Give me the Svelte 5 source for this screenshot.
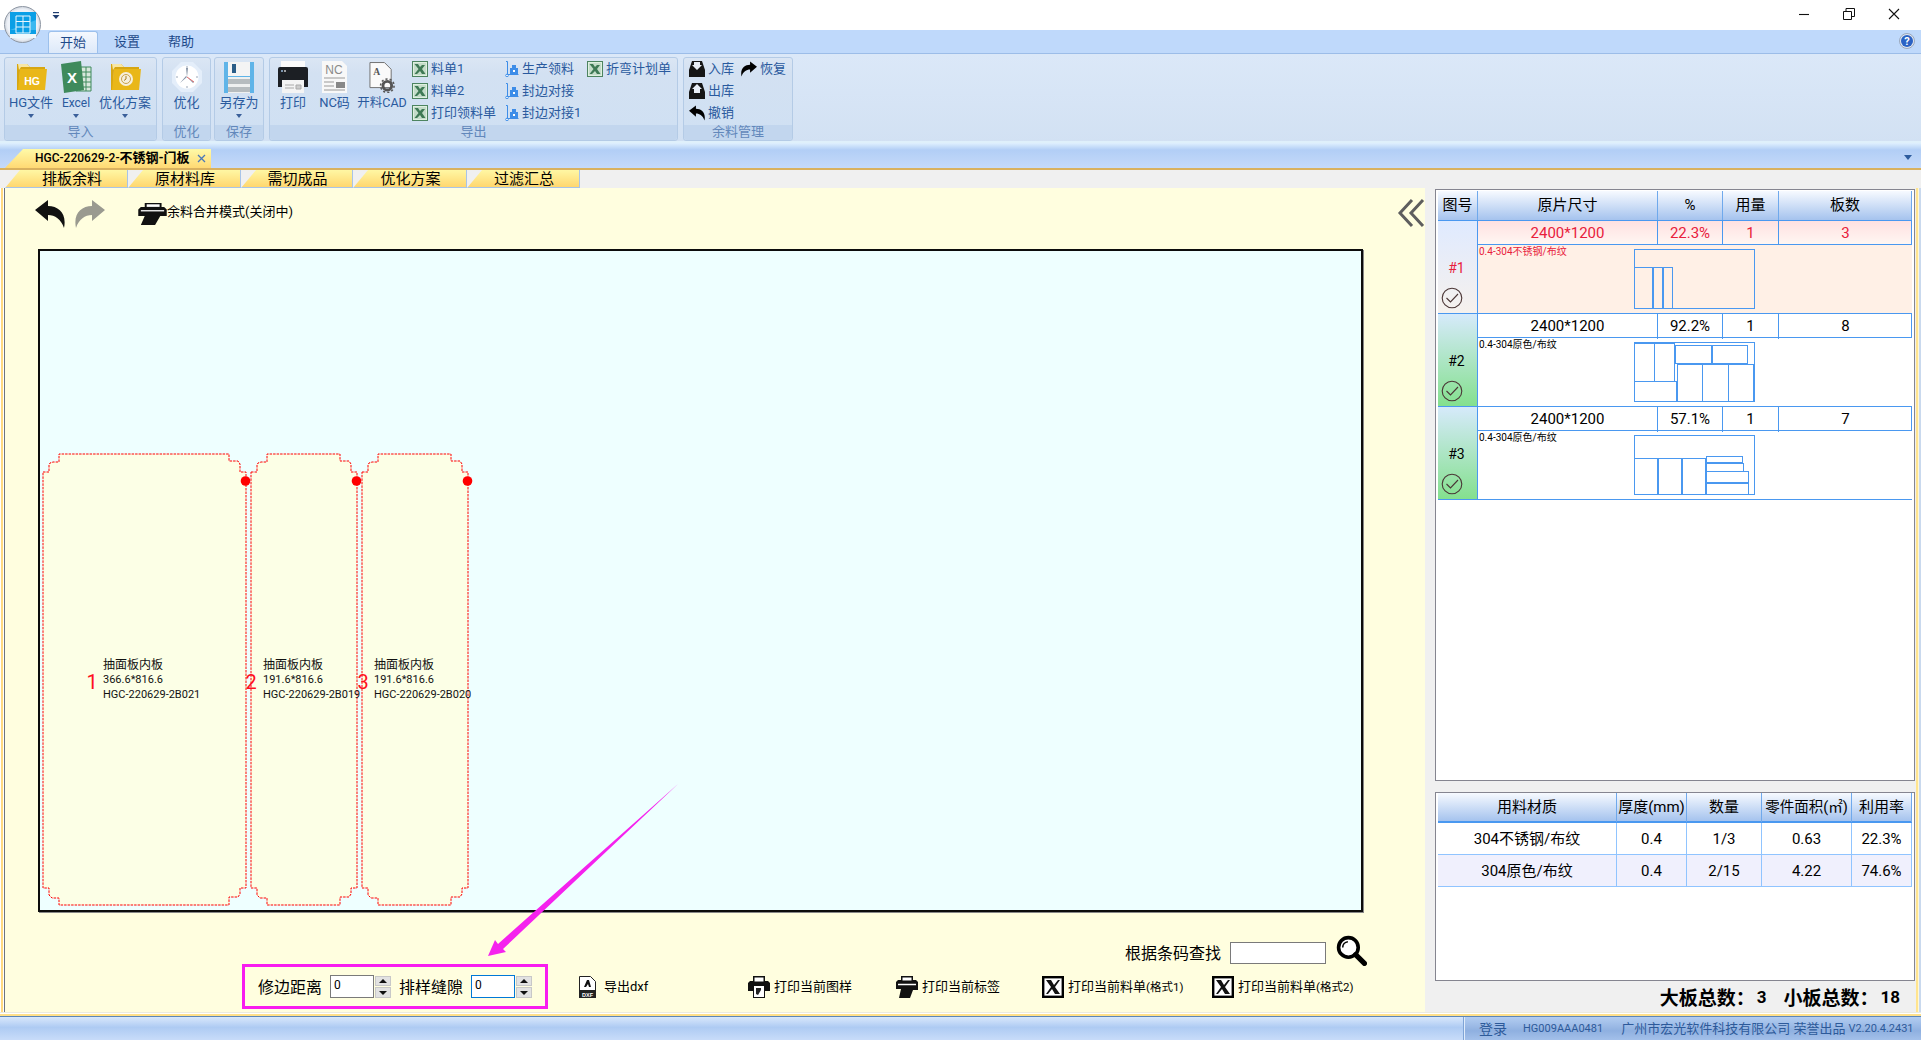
<script>
  const ribbonTabs = ['设置', '帮助'];
  const outCols = [
    { cls: 'c1', icon: 'xl', items: ['料单1', '料单2', '打印领料单'] },
    { cls: 'c2', icon: 'truck', items: ['生产领料', '封边对接', '封边对接1'] },
    { cls: 'c3', icon: 'xl', items: ['折弯计划单'] }
  ];
  const innerTabs = [
    ['排板余料', 123, 'first'], ['原材料库', 113, ''], ['需切成品', 112, ''], ['优化方案', 114, ''], ['过滤汇总', 113, '']
  ];
  const plans = [
    { id: '#1', pct: '22.3%', qty: 3, mat: '0.4-304不锈钢/布纹', hot: true,
      rects: [[0,18,18,41],[19,18,9,41],[29,18,9,41]] },
    { id: '#2', pct: '92.2%', qty: 8, mat: '0.4-304原色/布纹', hot: false,
      rects: [[0,1,20,38],[20,1,20,38],[41,3,36,18],[78,3,35,18],[43,22,25,37],[68,22,26,37],[94,22,25,37],[0,39,42,20]] },
    { id: '#3', pct: '57.1%', qty: 7, mat: '0.4-304原色/布纹', hot: false,
      rects: [[0,23,23,36],[24,23,23,36],[48,23,23,36],[72,21,36,6],[72,28,37,8],[72,36,42,11],[72,48,42,11]] }
  ];
  const mats = [
    ['304不锈钢/布纹', '0.4', '1/3', '0.63', '22.3%'],
    ['304原色/布纹', '0.4', '2/15', '4.22', '74.6%']
  ];
  const outline = (a, b, t, e) =>
    `M${a} ${t + 18}H${a + 6}V${t + 11}L${a + 7} ${t + 9}L${a + 10} ${t + 8}H${a + 16}V${t}H${b - 17}V${t + 7}H${b - 8}L${b - 6} ${t + 10}V${t + 18}H${b}V${e - 17}H${b - 6}V${e - 11}L${b - 8} ${e - 8}H${b - 17}V${e}H${a + 16}V${e - 7}H${a + 9}L${a + 6} ${e - 10}V${e - 17}H${a}Z`;
  const parts = [
    { a: 43, b: 246, n: '1', nx: 92, tx: 103, size: '366.6*816.6', code: 'HGC-220629-2B021' },
    { a: 251, b: 357, n: '2', nx: 251, tx: 263, size: '191.6*816.6', code: 'HGC-220629-2B019' },
    { a: 362, b: 468, n: '3', nx: 363, tx: 374, size: '191.6*816.6', code: 'HGC-220629-2B020' }
  ];
  const tools = [
    { icon: 'print1', label: '导出dxf', kind: 'dxf' },
    { icon: 'print1', label: '打印当前图样', kind: 'p1' },
    { icon: 'print2', label: '打印当前标签', kind: 'p2' },
    { icon: 'xb', label: '打印当前料单', tail: '(格式1)', kind: 'x' },
    { icon: 'xb', label: '打印当前料单', tail: '(格式2)', kind: 'x' }
  ];
</script>

<svg class="defs" width="0" height="0" aria-hidden="true">
  <defs>
    <symbol id="xl" viewBox="0 0 16 16">
      <rect x="0.5" y="0.5" width="15" height="15" fill="#dff0e0" stroke="#4d8460"/>
      <rect x="2" y="2" width="12" height="12" fill="#c4dcc9"/>
      <path d="M2.500 3h3.500l2 3 2-2h3l-3 4 3.500 5h-3.500l-2-3-3 3H2.500l4-5z" fill="#3f7a55"/>
    </symbol>
    <symbol id="truck" viewBox="0 0 14 16">
      <path d="M1 0.500h1.500V13.500H13.500" fill="none" stroke="#3d8de8" stroke-width="1"/>
      <circle cx="2" cy="14.500" r="1.300" fill="#fff" stroke="#3d8de8"/>
      <rect x="5" y="7" width="8" height="6" fill="#3d8de8"/>
      <rect x="7" y="4" width="4" height="3" fill="#3d8de8"/>
      <rect x="8" y="9" width="2" height="2" fill="#fff"/>
    </symbol>
    <symbol id="print1" viewBox="0 0 22 22">
      <path d="M5 0h12v5h3l2 2v8h-5v7H5v-7H0V7l2-2h3z" fill="#111"/>
      <rect x="6.500" y="1.500" width="9" height="4" fill="#fff"/>
      <path d="M6 10h10v11H6z" fill="#fff"/>
      <path d="M8 12h5v2l-3 5-2-1z" fill="#222"/>
    </symbol>
    <symbol id="print2" viewBox="0 0 22 22">
      <path d="M5 0h12v4h3l2 2v8h-5l-3 8H3l2-9H0V6l2-2h3z" fill="#111"/>
      <rect x="6.500" y="1.500" width="9" height="3" fill="#fff"/>
      <path d="M2 8.500h18" stroke="#fff" stroke-width="1.500"/>
    </symbol>
    <symbol id="xb" viewBox="0 0 22 22">
      <rect x="1.200" y="1.200" width="19.600" height="19.600" fill="#fff" stroke="#000" stroke-width="2.400"/>
      <path d="M4 4h5l3 5 4-5h2l-5 7 5 7h-5l-3-5-4 5H4l5-7z" fill="#111"/>
    </symbol>
    <symbol id="undo" viewBox="0 0 30 28">
      <path d="M0 10 13 0v6c11 0 19 8 16 22-3-9-9-13-16-13v6z"/>
    </symbol>
  </defs>
</svg>

<div class="app">
  <header class="title">
    <svg class="qat" viewBox="0 0 8 8"><rect x="1" y="0" width="6" height="1.200" fill="#1f3d70"/><path d="M0.500 3h7L4 7z" fill="#1f3d70"/></svg>
    <div class="winbtns">
      <svg class="wb" viewBox="0 0 12 12"><path d="M1 6.500h10" stroke="#111" stroke-width="1.100"/></svg>
      <svg class="wb" viewBox="0 0 12 12"><path d="M0.500 3.500h8v8h-8zM3 3.500v-3h8.500v8H8.500" fill="none" stroke="#111"/></svg>
      <svg class="wb" viewBox="0 0 12 12"><path d="M1 1l10 10M11 1L1 11" stroke="#111" stroke-width="1.100"/></svg>
    </div>
  </header>

  <nav class="rtabs">
    <div class="rtab active">开始</div>
    {#each ribbonTabs as t}<div class="rtab">{t}</div>{/each}
    <svg class="help" viewBox="0 0 16 16">
      <circle cx="8" cy="8" r="7.500" fill="#dfe6f0" stroke="#9aa8bd"/>
      <circle cx="8" cy="8" r="6" fill="#2a62c4"/>
      <text x="8" y="11.500" class="helpq">?</text>
    </svg>
  </nav>

  <section class="ribbon">
    <div class="group g1">
      <div class="gbody">
        <div class="big w52">
          <svg class="ico" viewBox="0 0 32 32"><path d="M2 3h10l3 3h15v3H5L4 29H2z" fill="#d7a612"/><path d="M3 3h9l3 3H6l-2 3z" fill="#f7e6a4"/><path d="M5 8h27l-2 21H3z" fill="#e9b718"/><text x="17" y="24" class="hg">HG</text></svg>
          <span>HG文件</span><i class="caret"></i>
        </div>
        <div class="big w38">
          <svg class="ico" viewBox="0 0 32 32"><path d="M16 6h15v24H16z" fill="#d9e8dd" stroke="#3f8a5c"/><path d="M20 6v24M26 6v24M16 11h15M16 16h15M16 21h15M16 26h15" stroke="#3f8a5c"/><path d="M1 3 21 0l3 29-20 3z" fill="#3f8a5c"/><text x="12" y="22" class="xlt">X</text></svg>
          <span class="lat">Excel</span><i class="caret"></i>
        </div>
        <div class="big w60">
          <svg class="ico" viewBox="0 0 32 32"><path d="M2 3h10l3 3h15v3H5L4 29H2z" fill="#d7a612"/><path d="M3 3h9l3 3H6l-2 3z" fill="#f7e6a4"/><path d="M5 8h27l-2 21H3z" fill="#e9b718"/><circle cx="17" cy="18" r="7" fill="#f6efdc"/><circle cx="17" cy="18" r="4.500" fill="none" stroke="#c9a24a"/><path d="M17 15v3l-2 1.500" stroke="#a67f20" fill="none"/></svg>
          <span>优化方案</span><i class="caret"></i>
        </div>
      </div>
      <div class="glabel">导入</div>
    </div>

    <div class="group g2">
      <div class="gbody">
        <div class="big w49">
          <svg class="ico" viewBox="0 0 32 32"><path d="M10 1h12l9 9v12l-9 9H10l-9-9V10z" fill="#e4eefa"/><circle cx="16" cy="16" r="11.500" fill="#fff"/><path d="M16 5v2M16 25v2M5 16h2M25 16h2" stroke="#9aa7b8"/><path d="M16 16 15 7l2 0zM16 16l-7 6 6-7zM16 16l7 5-1 1z" fill="#8593a6"/><path d="M16 16l7 5" stroke="#e57070"/></svg>
          <span>优化</span>
        </div>
      </div>
      <div class="glabel">优化</div>
    </div>

    <div class="group g3">
      <div class="gbody">
        <div class="big w50">
          <svg class="ico" viewBox="0 0 32 32"><rect x="1" y="1" width="30" height="31" fill="#5fb4e8"/><rect x="5" y="1" width="22" height="14" fill="#f4f4f4"/><rect x="9" y="3" width="4" height="9" fill="#2a5d88"/><rect x="5" y="16" width="22" height="16" fill="#eef0f0"/><rect x="5" y="18" width="22" height="5" fill="#b6bcbf"/><rect x="5" y="26" width="22" height="5" fill="#b6bcbf"/></svg>
          <span>另存为</span><i class="caret"></i>
        </div>
      </div>
      <div class="glabel">保存</div>
    </div>

    <div class="group g4">
      <div class="gbody out">
        <div class="big w40">
          <svg class="ico" viewBox="0 0 32 32"><rect x="4" y="0" width="24" height="6" fill="#fbfbfb"/><path d="M3 6h26q2 0 2 2v18H1V8q0-2 2-2z" fill="#1c1f24"/><circle cx="5" cy="10" r="1" fill="#9bd"/><circle cx="8" cy="10" r="1" fill="#ccc"/><rect x="5" y="19" width="22" height="13" fill="#f4f4f4"/><path d="M8 24h9M8 27h9M19 24h5v4h-5z" stroke="#aaa" fill="#ccc"/></svg>
          <span>打印</span>
        </div>
        <div class="big w42">
          <svg class="ico nar" viewBox="0 0 25 32"><path d="M0 0h20l5 5v27H0z" fill="#f8f8f8"/><text x="12" y="13" class="nct">NC</text><path d="M2 17h21M2 21h10M2 25h10M2 29h21" stroke="#9a9a9a"/><rect x="14" y="21" width="9" height="6" fill="#888"/></svg>
          <span>NC码</span>
        </div>
        <div class="big w52">
          <svg class="ico nar" viewBox="0 0 28 32"><path d="M1 1h15l7 7v19H1z" fill="#fafafa" stroke="#6e6e6e"/><text x="8" y="14" class="cad">A</text><circle cx="19" cy="25" r="4.500" fill="none" stroke="#555" stroke-width="3"/><circle cx="19" cy="25" r="7" fill="none" stroke="#555" stroke-width="1.600" stroke-dasharray="2.200 2.200"/></svg>
          <span class="tight">开料CAD</span>
        </div>
      </div>
      <div class="glabel">导出</div>
      <div class="smalls">
        {#each outCols as col}
          <ul class="smallcol {col.cls}">
            {#each col.items as it}
              <li><svg class={col.icon === 'xl' ? 'sx' : 'st'}><use href="#{col.icon}"/></svg>{it}</li>
            {/each}
          </ul>
        {/each}
      </div>
    </div>

    <div class="group g5">
      <div class="gbody stock">
        <ul class="smallcol">
          <li>
            <svg class="sx" viewBox="0 0 16 16"><path d="M3 0h10l3 9v7H0V9z" fill="#161616"/><path d="M5 1h6v3h2L8 9 3 4h2z" fill="#e8eef6"/></svg>入库
          </li>
          <li>
            <svg class="sx" viewBox="0 0 16 16"><path d="M3 0h10l3 9v7H0V9z" fill="#161616"/><path d="M8 1l5 5h-2v4H5V6H3z" fill="#e8eef6"/></svg>出库
          </li>
          <li><svg class="sx"><use href="#undo"/></svg>撤销</li>
        </ul>
        <ul class="smallcol">
          <li><svg class="sx flip"><use href="#undo"/></svg>恢复</li>
        </ul>
      </div>
      <div class="glabel">余料管理</div>
    </div>
  </section>

  <div class="docstrip">
    <div class="doctab">
      <span>HGC-220629-2-<b>不锈钢-门板</b></span>
      <svg class="docx" viewBox="0 0 9 9"><path d="M1 1l7 7M8 1L1 8" stroke="#4a78b8" stroke-width="1.300"/></svg>
    </div>
    <svg class="docmenu" viewBox="0 0 8 5"><path d="M0 0h8L4 5z" fill="#2d5c9e"/></svg>
  </div>
  <div class="orange"></div>

  <div class="ptabs">
    {#each innerTabs as [t, w, c]}
      <div class="ptab {c}" style:width="{w}px">{t}</div>
    {/each}
  </div>

  <main class="main">
    <div class="frame-l"></div>
    <div class="work">
      <div class="toolbar">
        <svg class="tb-u"><use href="#undo"/></svg>
        <svg class="tb-r"><use href="#undo"/></svg>
        <svg class="tb-p" viewBox="0 0 22 17"><path d="M5 0h13v3h2l2 2v5h-5l-4 7H2l3-7H0V5l2-2h3z" fill="#111"/><rect x="6.500" y="1" width="10" height="2" fill="#fff"/><path d="M2 6h18" stroke="#fff"/></svg>
        <span class="tb-t">余料合并模式(关闭中)</span>
        <svg class="chev" viewBox="0 0 28 30"><path d="M15 2 3 15l12 13M26 2 14 15l12 13" fill="none" stroke="#5e5e5e" stroke-width="3"/></svg>
      </div>

      <div class="canvas">
        <svg class="sheet" viewBox="40 251 1321 659">
          {#each parts as p}
            <path d={outline(p.a, p.b, 454, 905)} class="part"/>
            <circle cx={p.b - 0.5} cy="481" r="4.800" fill="#ff0000"/>
            <text x={p.nx} y="689" class="pn">{p.n}</text>
            <text x={p.tx} y="669" class="pt">抽面板内板</text>
            <text x={p.tx} y="683" class="pl">{p.size}</text>
            <text x={p.tx} y="697.500" class="pl">{p.code}</text>
          {/each}
        </svg>
      </div>

      <div class="search">
        <label for="barcode">根据条码查找</label>
        <input id="barcode" class="sinput" />
        <svg class="mag" viewBox="0 0 30 30"><circle cx="12" cy="12" r="9.500" fill="#fff" stroke="#000" stroke-width="3.500"/><path d="M6.500 12a5.500 5.500 0 0 1 5-5.500" stroke="#000" fill="none" stroke-width="1.500"/><path d="M19 19l8.500 8.500" stroke="#000" stroke-width="5" stroke-linecap="round"/></svg>
      </div>

      <div class="actions">
        <div class="magbox">
          <span class="flabel">修边距离</span>
          <span class="num"><input value="0" /></span>
          <span class="spin"><i class="up"></i><i class="dn"></i></span>
          <span class="flabel second">排样缝隙</span>
          <span class="num focus"><input value="0" /></span>
          <span class="spin"><i class="up"></i><i class="dn"></i></span>
        </div>
        <div class="toolgrid">
          {#each tools as t}
            <div class="tool">
              {#if t.kind === 'dxf'}
                <svg class="dxf" viewBox="0 0 17 22"><path d="M0.500 0.500h11l5 5V21.500H0.500z" fill="#fff" stroke="#222"/><path d="M5 11l3-7h2l2 7h-2l-1-3-2 3z" fill="#111"/><rect x="0" y="14" width="17" height="8" fill="#222"/><text x="8.500" y="20.500" class="dxft">DXF</text></svg>
              {:else}
                <svg class="tic"><use href="#{t.icon}"/></svg>
              {/if}
              <span>{t.label}{#if t.tail}<small>{t.tail}</small>{/if}</span>
            </div>
          {/each}
        </div>
      </div>
    </div>

    <aside class="side">
      <div class="box plans">
        <div class="phead">
          <div>图号</div><div>原片尺寸</div><div>%</div><div>用量</div><div>板数</div>
        </div>
        {#each plans as p}
          <div class="plan" class:hot={p.hot}>
            <div class="pid">
              <span class="pidt">{p.id}</span>
              <svg class="chk" viewBox="0 0 22 22"><circle cx="11" cy="11" r="9.800" fill="none" stroke="#4a3535" stroke-width="1.100"/><path d="M5.500 11l4 4 7.500-8" fill="none" stroke="#4a3535" stroke-width="1.100"/></svg>
            </div>
            <div class="pright">
              <div class="ptop">
                <div>2400*1200</div><div>{p.pct}</div><div>1</div><div>{p.qty}</div>
              </div>
              <div class="psub">
                <span class="pmat">{p.mat}</span>
                <svg class="thumb" viewBox="0 0 121 60">
                  <rect x="0.500" y="0.500" width="120" height="59" class="tr"/>
                  {#each p.rects as [x, y, w, h]}
                    <rect x={x + 0.5} y={y + 0.5} width={w} height={h} class="tr"/>
                  {/each}
                </svg>
              </div>
            </div>
          </div>
        {/each}
      </div>

      <div class="box matbox">
        <div class="mhead">
          <div>用料材质</div><div>厚度(mm)</div><div>数量</div><div>零件面积(㎡)</div><div>利用率</div>
        </div>
        {#each mats as r}
          <div class="mrow">
            {#each r as c}<div>{c}</div>{/each}
          </div>
        {/each}
      </div>

      <div class="totals">
        <span>大板总数&#xFF1A;</span><span class="tv1">3</span><span class="tl2">小板总数&#xFF1A;</span><span class="tv2">18</span>
      </div>
    </aside>
    <div class="frame-r"></div>
  </main>

  <div class="frame-b"></div>

  <footer class="status">
    <div class="st-left"></div>
    <div class="st-right">
      <span class="s1">登录</span>
      <span class="s2">HG009AAA0481</span>
      <span class="s3">广州市宏光软件科技有限公司 荣誉出品</span>
      <span class="s4">V2.20.4.2431</span>
    </div>
  </footer>

  <!-- overlays -->
  <div class="logo">
    <div class="logo-in">
      <svg viewBox="0 0 26 26"><rect x="0" y="0" width="26" height="26" fill="#0a9fe6"/><path d="M0 18 26 8v10z" fill="#3ab8f0"/><path d="M6 4h14v17H6z" fill="#0a9fe6" stroke="#e8f6fd"/><path d="M6 9.500h14M6 15h14M13 4v17" stroke="#e8f6fd"/><rect x="0" y="22" width="26" height="4" fill="#eef8fd"/></svg>
    </div>
  </div>
  <svg class="arrow" viewBox="0 0 1921 1040">
    <path d="M678 784 498 944 495 940 488 956 506 952 503 949z" fill="#f522ee"/>
  </svg>
</div>

<style>
  :global(body) { margin: 0; background: #fff; }
  .app {
    position: relative;
    width: 1921px;
    height: 1040px;
    overflow: hidden;
    display: flex;
    flex-direction: column;
    font-family: Roboto, "Noto Sans CJK SC", sans-serif;
    font-size: 13px;
    color: #000;
  }
  .defs { position: absolute; }
  ul { list-style: none; margin: 0; padding: 0; }
  input { font: inherit; box-sizing: border-box; margin: 0; }

  .title { height: 30px; flex: none; background: #fff; display: flex; align-items: flex-start; }
  .qat { width: 8px; height: 8px; margin: 12px 0 0 52px; }
  .winbtns { margin-left: auto; display: flex; gap: 33px; padding: 8px 21px 0 0; }
  .wb { width: 12px; height: 12px; }

  .rtabs {
    height: 23px; flex: none; background: #bfd9fb;
    display: flex; align-items: flex-end; padding-left: 48px; position: relative;
    color: #1e4a8a;
  }
  .rtab { width: 54px; height: 22px; line-height: 21px; text-align: center; font-size: 13px; }
  .rtab.active {
    width: 50px; margin-right: 2px; box-sizing: border-box; border: 1px solid #9cc0ec; border-bottom: 0;
    border-radius: 3px 3px 0 0; background: linear-gradient(#f4f8fe, #dde9f9);
  }
  .help { width: 16px; height: 16px; position: absolute; right: 6px; top: 3px; }
  .helpq { font-size: 11px; font-weight: 700; fill: #fff; text-anchor: middle; }

  .ribbon {
    height: 90px; flex: none; box-sizing: border-box;
    border-top: 1px solid #9cbde8;
    background: linear-gradient(#dbe8f8, #d2e1f3);
    display: flex; padding: 3px 0 0 4px; color: #2a5a9e;
    box-shadow: inset 0 -2px 0 #dff0fb;
  }
  .group {
    position: relative; height: 84px; box-sizing: border-box;
    border: 1px solid #b4cbe6; border-radius: 3px;
    background: linear-gradient(#dbe6f4 0, #d3e1f2 18%, #cfe0f3 100%);
    display: flex; flex-direction: column;
  }
  .g1 { width: 153px; margin-right: 5px; }
  .g2 { width: 49px; margin-right: 3px; }
  .g3 { width: 50px; margin-right: 5px; }
  .g4 { width: 409px; margin-right: 5px; }
  .g5 { width: 110px; }
  .gbody { height: 67px; display: flex; flex: none; }
  .gbody.out { padding-left: 3px; box-sizing: border-box; }
  .glabel {
    height: 16px; line-height: 13px; text-align: center; background: #c2d6ee;
    color: #6288bb; font-size: 13px; border-radius: 0 0 3px 3px;
  }
  .big { display: flex; flex-direction: column; align-items: center; padding-top: 3px; box-sizing: border-box; white-space: nowrap; font-size: 13px; }
  .big span { line-height: 18px; margin-top: 1px; }
  .big .lat { font-size: 12px; }
  .big .tight { font-size: 12.500px; }
  .w52 { width: 52px; } .w38 { width: 38px; } .w60 { width: 60px; } .w49 { width: 47px; } .w50 { width: 48px; } .w40 { width: 40px; } .w42 { width: 43px; }
  .ico { width: 32px; height: 32px; flex: none; }
  .ico.nar { width: 27px; }
  .caret { width: 0; height: 0; border: 3.500px solid transparent; border-top: 4px solid #3a5f9a; border-bottom: 0; margin-top: 2px; }
  .hg { font: 700 10.500px "Liberation Sans", sans-serif; fill: #fff; text-anchor: middle; }
  .xlt { font: 700 15px "Liberation Sans", sans-serif; fill: #fff; text-anchor: middle; }
  .nct { font: 400 12px "Liberation Sans", sans-serif; fill: #8a8a8a; text-anchor: middle; }
  .cad { font: 700 10px "Liberation Serif", serif; fill: #555; text-anchor: middle; }
  .dxft { font: 700 5.500px "Liberation Sans", sans-serif; fill: #fff; text-anchor: middle; }

  .smalls { position: absolute; left: 142px; top: 0; display: flex; }
  .smallcol { display: flex; flex-direction: column; gap: 0; white-space: nowrap; }
  .smallcol li { height: 22px; display: flex; align-items: center; font-size: 13px; line-height: 18px; }
  .c1 { width: 93px; } .c2 { width: 82px; }
  .sx { width: 16px; height: 16px; margin-right: 3px; flex: none; }
  .sx.flip { transform: scaleX(-1); }
  .st { width: 14px; height: 16px; margin-right: 3px; flex: none; }
  .stock { padding: 0 0 0 5px; box-sizing: border-box; gap: 7px; }

  .docstrip {
    height: 25px; flex: none; position: relative;
    background: linear-gradient(#dff0fe 0, #b2cef6 28%, #c5daf9 100%);
    display: flex; align-items: flex-end; padding-left: 5px;
  }
  .doctab {
    width: 206px; height: 19px; box-sizing: border-box; display: flex; align-items: center;
    padding-left: 30px; background: linear-gradient(#fffaa8, #ffd973);
    clip-path: polygon(18px 0, 100% 0, 100% 100%, 0 100%);
    font-size: 12px;
  }
  .doctab span { white-space: nowrap; font-weight: 500; line-height: 15px; margin-top: -2px; }
  .doctab b { font-weight: 700; font-size: 13px; }
  .docx { width: 9px; height: 9px; margin-left: auto; margin-right: 5px; }
  .docmenu { position: absolute; right: 9px; top: 12px; width: 8px; height: 5px; }
  .orange { height: 2px; flex: none; background: #d9b15e; }

  .ptabs { height: 18px; flex: none; background: #f0f0f0; display: flex; padding-left: 5px; }
  .ptab {
    box-sizing: border-box; height: 18px; line-height: 18px; text-align: center; font-size: 15px; padding-left: 2px;
    background: linear-gradient(#fff7a4, #ffd76f);
    border-right: 1px solid #a8c4e8; border-bottom: 1px solid #a8c4e8;
    clip-path: polygon(15px 0, 100% 0, 100% 100%, 0 100%);
  }
  .ptab.first { padding-left: 12px; }

  .main { flex: none; height: 824px; display: flex; }
  .frame-l { width: 5px; flex: none; background: linear-gradient(90deg, #fff 0 1px, #ffd97f 1px 3px, #fff 3px 4px, #6b7480 4px 5px); }
  .frame-r { width: 5px; flex: none; background: linear-gradient(90deg, #ffe48f 0 2px, #fff8d8 2px 3px, #c9d9ee 3px); }
  .work { width: 1420px; flex: none; background: #fffedf; display: flex; flex-direction: column; }

  .toolbar { height: 61px; flex: none; box-sizing: border-box; padding: 12px 0 0 30px; display: flex; align-items: flex-start; }
  .tb-u { width: 30px; height: 28px; fill: #111; }
  .tb-r { width: 30px; height: 28px; fill: #9a9a90; margin-left: 10px; transform: scaleX(-1); }
  .tb-p { width: 29px; height: 22px; margin: 3px 0 0 33px; }
  .tb-t { font-size: 13px; line-height: 20px; margin-top: 2px; white-space: nowrap; }
  .chev { width: 28px; height: 30px; margin: -2px 0 0 auto; }

  .canvas {
    width: 1325px; height: 663px; flex: none; margin-left: 33px; box-sizing: border-box;
    border: 2px solid #0c0c0c; box-shadow: 1px 1px 0 #888; background: #eeffff;
  }
  .sheet { display: block; width: 1321px; height: 659px; }
  .part { fill: #fcffe6; stroke: #ff0000; stroke-width: 1; stroke-dasharray: 2.500 1; }
  .pn { font-size: 20px; fill: #ff1020; text-anchor: middle; }
  .pt { font-size: 12px; fill: #111; }
  .pl { font-size: 11px; fill: #111; }

  .search { height: 22px; margin-top: 30px; flex: none; display: flex; justify-content: flex-end; align-items: center; padding-right: 58px; font-size: 16px; }
  .search label { margin: -2px 9px 0 0; white-space: nowrap; }
  .sinput { width: 96px; height: 22px; border: 1px solid #7a7a7a; background: #fff; margin-right: 10px; }
  .mag { width: 31px; height: 31px; flex: none; margin-top: -6px; }

  .actions { height: 45px; flex: none; display: flex; padding-left: 237px; }
  .magbox {
    width: 306px; height: 45px; box-sizing: border-box; border: 3px solid #f81cf0;
    display: flex; align-items: center; padding-left: 13px; font-size: 16px; flex: none;
  }
  .flabel { width: 72px; white-space: nowrap; margin-top: -2px; }
  .flabel.second { width: 72px; margin-left: 8px; }
  .num { width: 44px; height: 23px; box-sizing: border-box; border: 1px solid #7a7a7a; background: #fff; flex: none; }
  .num.focus { border-color: #0078d7; }
  .num input { border: 0; outline: 0; width: 100%; height: 100%; padding: 0 0 3px 3px; font-size: 12px; background: transparent; display: block; }
  .spin { width: 16px; height: 22px; margin-left: 1px; display: flex; flex-direction: column; gap: 1px; flex: none; }
  .spin i { flex: 1; background: #e2e2e2; border: 1px solid #c8c8c8; position: relative; box-sizing: border-box; }
  .spin i::after { content: ""; position: absolute; left: 3px; top: 2px; border: 4px solid transparent; border-top: 0; border-bottom: 4px solid #111; }
  .spin i.dn::after { border-bottom: 0; border-top: 4px solid #111; top: 3px; }

  .toolgrid { display: grid; grid-template-columns: 169px 148px 146px 170px auto; margin-left: 31px; align-items: center; height: 45px; }
  .tool { display: flex; align-items: center; white-space: nowrap; font-size: 13px; }
  .tool span { margin-top: -3px; }
  .tool small { font-size: 11.500px; }
  .tic { width: 22px; height: 22px; margin-right: 4px; flex: none; }
  .dxf { width: 17px; height: 22px; margin-right: 8px; flex: none; }

  .side { width: 491px; flex: none; background: #f0f0f0; box-sizing: border-box; padding: 1px 1px 0 10px; display: flex; flex-direction: column; }
  .box { box-sizing: border-box; border: 1px solid #858590; background: #fff; padding: 1px 2px 0; width: 480px; flex: none; }
  .plans { height: 592px; }
  .matbox { height: 189px; margin-top: 11px; padding-top: 0; }

  .phead, .mhead {
    display: grid; height: 30px; line-height: 29px; text-align: center; font-size: 15px;
    background: linear-gradient(#f7faff, #a5c3ee); border-bottom: 1px solid #4a98f0; box-sizing: border-box;
  }
  .phead { grid-template-columns: 40px 180px 65px 56px 133px; }
  .phead div, .mhead div { border-right: 1px solid #6fa9ec; }
  .plan { display: grid; grid-template-columns: 40px 434px; height: 93px; box-sizing: border-box; border-bottom: 1px solid #4a98f0; }
  .pid {
    background: linear-gradient(#d6eafb, #84e08e); position: relative; border-right: 1px solid #4a98f0;
    display: flex; flex-direction: column; align-items: center; box-sizing: border-box;
  }
  .hot .pid { background: linear-gradient(#dfeaff, #f6f1ed); color: #e8203c; }
  .pidt { font-size: 14px; line-height: 18px; margin: 38px 2px 0 0; }
  .chk { width: 22px; height: 22px; margin: 10px 11px 0 0; }
  .ptop { display: grid; grid-template-columns: 180px 65px 56px 133px; height: 24px; box-sizing: border-box; border-bottom: 1px solid #4a98f0; border-right: 1px solid #4a98f0; line-height: 25px; text-align: center; font-size: 15px; }
  .ptop div { border-right: 1px solid #4a98f0; }
  .ptop div:last-child { border-right: 0; }
  .psub { height: 68px; position: relative; }
  .pmat { display: block; font-size: 10px; line-height: 14px; padding: 0 0 0 1px; white-space: nowrap; }
  .thumb { position: absolute; left: 156px; top: 4px; width: 121px; height: 60px; }
  .tr { fill: none; stroke: #4a98f0; stroke-width: 1; }
  .hot .ptop { background: linear-gradient(#ffe1e1, #fff6f2); color: #e8203c; }
  .hot .psub { background: #fff0e6; color: #e8203c; }

  .mhead { grid-template-columns: 179px 70px 75px 90px 60px; height: 30px; border-bottom-width: 2px; line-height: 29px; }
  .mhead div:nth-child(4) { white-space: nowrap; font-size: 14.500px; }
  .mrow { display: grid; grid-template-columns: 179px 70px 75px 90px 60px; height: 32px; line-height: 32px; text-align: center; font-size: 15px; box-sizing: border-box; border-bottom: 1px solid #90c4ff; }
  .mrow:nth-child(3) { background: #f0f0fd; }
  .mrow div { border-right: 1px solid #90c4ff; }

  .totals { flex: 1; display: flex; justify-content: flex-end; align-items: center; font-weight: 700; font-size: 19px; padding-right: 15px; white-space: nowrap; }
  .tv1 { margin-left: 2px; font-size: 17px; }
  .tl2 { margin-left: 17px; }
  .tv2 { margin-left: 2px; font-size: 17px; }

  .frame-b { height: 5px; flex: none; background: linear-gradient(#ecebe0 0 1px, #fff 1px 2px, #ffe08a 2px 4px, #5c86b8 4px 5px); }

  .status { height: 23px; flex: none; display: flex; color: #2d5a9a; }
  .st-left { width: 1463px; flex: none; background: linear-gradient(#d9e8fc, #aecbf3 45%, #c8dcf9); border-right: 1px solid #7fa4d6; }
  .st-right { flex: 1; display: flex; align-items: center; background: linear-gradient(#b3cdf1, #8fb0e0 60%, #a3c0ea); white-space: nowrap; border-left: 1px solid #e0ecfb; box-sizing: border-box; line-height: 18px; }
  .s1 { margin-left: 14px; font-size: 14px; }
  .s2 { margin-left: 16px; font-size: 11px; }
  .s3 { margin-left: 18px; font-size: 13px; }
  .s4 { margin-left: 3px; font-size: 11px; }

  .logo {
    position: absolute; left: 4px; top: 6px; width: 37px; height: 37px; border-radius: 50%;
    background: radial-gradient(circle, #eef2f8 60%, #8e97a5 100%); border: 1px solid #8d96a3;
    box-sizing: border-box; display: flex; align-items: center; justify-content: center;
  }
  .logo-in { width: 26px; height: 30px; display: flex; align-items: center; }
  .logo-in svg { width: 26px; height: 26px; }
  .arrow { position: absolute; left: 0; top: 0; width: 1921px; height: 1040px; pointer-events: none; }
</style>
